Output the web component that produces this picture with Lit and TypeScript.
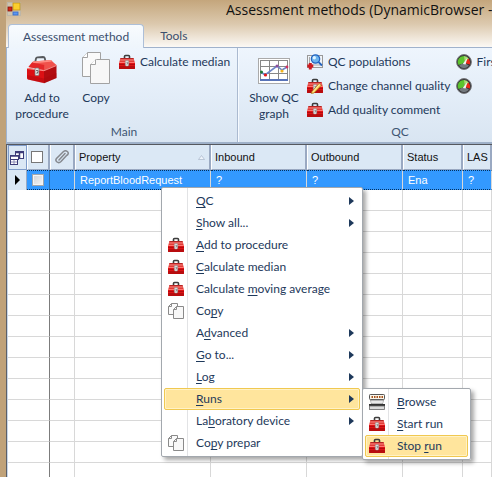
import { LitElement, html, css, svg, nothing } from "lit";
import { customElement, property } from "lit/decorators.js";
import { classMap } from "lit/directives/class-map.js";

type IconName = "box" | "bigbox" | "copy" | "bigcopy" | "graph" | "population" | "edit" | "gauge" | "analyser" | "clip" | "fields" | "app";

const toolbox = svg`
  <path d="M5.500 4.500V2.500Q5.500 1.500 6.500 1.500H9.500Q10.500 1.500 10.500 2.500V4.500" fill="none" stroke="#3c3c3c" stroke-width="1.600"/>
  <path d="M1.500 4H14.500L16 9H0Z" fill="#e23c38"/>
  <path d="M1.500 4.500H14.500" stroke="#b42422"/>
  <path d="M1.200 6H14.800" stroke="#f4817c"/>
  <rect x="0" y="8" width="16" height="7" rx=".8" fill="#e01216"/>
  <rect x="0" y="12" width="16" height="3" rx=".8" fill="#b80c0e"/>
  <path d="M0 8.500H16" stroke="#ff7771"/>
  <path d="M0 10.500H16" stroke="#a00a0c" stroke-width=".7"/>
  <rect x="6.300" y="6.500" width="3.400" height="5.500" rx="1" fill="#f2f2f2" stroke="#8a8080" stroke-width=".6"/>
  <path d="M7.200 8.200H8.800V9.400H8V10.800" fill="none" stroke="#666" stroke-width=".7"/>`;

const icons: Record<IconName, { box: string; art: unknown }> = {
  box: { box: "0 0 16 16", art: toolbox },
  edit: {
    box: "0 0 16 16",
    art: svg`${toolbox}
      <path d="M5 13.500L12 5.500L14.200 7.400L7 15L4.300 15.600Z" fill="#ffd35a" stroke="#a8741c" stroke-width=".7"/>
      <path d="M6 13.800L12.800 6.300" stroke="#fff4c0" stroke-width=".8"/>`,
  },
  bigbox: {
    box: "0 0 32 28",
    art: svg`
      <path d="M9 7L10 2.500Q10.300 1.500 11.500 1.400L17 1Q18.500 1 18.800 2.200L19.500 6" fill="none" stroke="#55585c" stroke-width="1.800"/>
      <path d="M2.500 11L7 5.500L25 4L30 9.500L18 14Z" fill="#f0524c"/>
      <path d="M7 5.500L25 4L26 5.500L7 7.500Z" fill="#ff8d84"/>
      <path d="M1 12L18 14V27L2 23.500Q1 23 1 22Z" fill="#dc1014"/>
      <path d="M2.500 11L6 6.500L18.500 9V14Z" fill="#e4282a"/>
      <path d="M18 14L30.500 9V22L18 27.300Z" fill="#b20c10"/>
      <path d="M18.500 9L26 5.500L30.500 9L18 14Z" fill="#f0524c"/>
      <path d="M1 12.500L18 14.700L30.500 9.500" fill="none" stroke="#ff9c94" stroke-width=".9"/>
      <path d="M1 19L18 22.500L30.500 17V22L18 27.300L2 23.500Z" fill="#a8080c" opacity=".4"/>
      <rect x="9" y="12" width="4" height="7.500" rx="1" fill="#e4e4e4" stroke="#777" stroke-width=".7"/>
      <path d="M10 14.500H12V16.500H11V18" fill="none" stroke="#555" stroke-width=".8"/>`,
  },
  copy: {
    box: "0 0 16 16",
    art: svg`
      <path d="M3.500 .5H9.500V11.500H.5V3.500Z" fill="#fafafa" stroke="#8a8a8a"/>
      <path d="M.5 3.500H3.500V.5" fill="none" stroke="#8a8a8a"/>
      <path d="M8.500 3.500H15.500V15.500H5.500V6.500Z" fill="#f8f8f8" stroke="#8a8a8a"/>
      <path d="M5.500 6.500H8.500V3.500" fill="none" stroke="#8a8a8a"/>`,
  },
  bigcopy: {
    box: "0 0 28 32",
    art: svg`
      <path d="M5.500 .5H18.500V24.500H.5V5.500Z" fill="#fafafa" stroke="#a2a2a2"/>
      <path d="M.5 5.500H5.500V.5" fill="#fff" stroke="#a2a2a2"/>
      <path d="M14.500 7.500H27.500V31.500H8.500V12.500Z" fill="#f7f7f7" stroke="#a2a2a2"/>
      <path d="M8.500 12.500H13.500V7.500" fill="#fff" stroke="#a2a2a2"/>`,
  },
  graph: {
    box: "0 0 32 26",
    art: svg`
      <rect x=".5" y=".5" width="31" height="25" fill="#fff" stroke="#aaa"/>
      <rect x="2.500" y="2.500" width="27" height="20" fill="#fff" stroke="#888"/>
      <path d="M11.500 3V21M20.500 3V21M3 8.500H29M3 15.500H29" stroke="#888"/>
      <rect x="2" y="21" width="28" height="2" fill="#5873b8"/>
      <path d="M3 14L7 17L19 8L24 12L29 9" fill="none" stroke="#6d86c8" stroke-width="1.600"/>
      <circle cx="3.500" cy="14" r="1.500" fill="#1d7a34"/><circle cx="7.500" cy="17" r="1.600" fill="#e81818"/>
      <circle cx="19" cy="8" r="1.500" fill="#8a4a9c"/><circle cx="24" cy="13" r="1.600" fill="#f4b41c"/>
      <circle cx="29" cy="9" r="1.400" fill="#d03060"/>`,
  },
  population: {
    box: "0 0 16 16",
    art: svg`
      <rect x=".5" y="1.500" width="15" height="12" fill="#f0f4f8" stroke="#999"/>
      <path d="M2.500 3V11H14" fill="none" stroke="#aaa"/>
      <circle cx="8.500" cy="5" r="4.200" fill="#6cb4ee" stroke="#2464c0" stroke-width="1.200"/>
      <circle cx="7.300" cy="3.800" r="1.700" fill="#e0f4ff"/>
      <path d="M11.500 8L15 11.500" stroke="#2464c0" stroke-width="1.800"/>
      <path d="M.3 10.500H6.300V13.500H.3ZM1.800 9H4.800V15.500H1.800Z" fill="#cc1a20"/>`,
  },
  gauge: {
    box: "0 0 16 16",
    art: svg`
      <circle cx="8" cy="8" r="7.400" fill="#333336" stroke="#77777a" stroke-width="1"/>
      <path d="M2.500 11A6 6 0 0 1 8 2L8.500 9Z" fill="#5cc42e"/>
      <path d="M8 2A6 6 0 0 1 13 5L8.500 9Z" fill="#a6e070"/>
      <path d="M12.200 4.500A6 6 0 0 1 13.800 10.500L8.500 9Z" fill="#ee2818"/>
      <path d="M3 11.800Q8 6.500 13 11.800Q11 14.200 8 14.200T3 11.800Z" fill="#74797e"/>
      <path d="M6.800 10L11.400 3.800L9.600 10.600Z" fill="#f4f4f4"/>`,
  },
  analyser: {
    box: "0 0 16 16",
    art: svg`
      <rect x=".5" y=".5" width="15" height="5" rx=".8" fill="#faf6ea" stroke="#555"/>
      <path d="M2.500 3H14" stroke="#a85420" stroke-width="2" stroke-dasharray="1.500 1"/>
      <path d="M1.500 6H14.500L13.500 10H2.500Z" fill="#d4d4d4" stroke="#777" stroke-width=".6"/>
      <path d="M2 8H14" stroke="#fff"/>
      <rect x="0" y="10" width="16" height="2" fill="#333"/>
      <rect x=".5" y="12" width="15" height="3.500" fill="#dcdcdc" stroke="#666" stroke-width=".8"/>`,
  },
  clip: {
    box: "0 0 16 16",
    art: svg`<path d="M13 6L7 12.500Q5 14.500 3 13T2.500 9.500L9.500 2.500Q11.500 1 13.300 2.500T13.500 6M11 4.500L5 11" fill="none" stroke="#85888e" stroke-width="1.500" stroke-linecap="round"/>`,
  },
  fields: {
    box: "0 0 16 16",
    art: svg`
      <rect x="6.500" y="1.500" width="8" height="7" fill="#fff" stroke="#3c3c78"/>
      <path d="M6 2.500H15M10.500 3V8" stroke="#3c3c78" stroke-width="1.500"/>
      <rect x="1.500" y="5.500" width="8" height="4" fill="#fff" stroke="#3c3c78"/>
      <path d="M1 6H10" stroke="#3c3c78" stroke-width="1.500"/>
      <rect x="1.500" y="9.500" width="7" height="5" fill="#fff" stroke="#3c3c78"/>
      <path d="M2 12H8M5 10V14" stroke="#8c8cb8"/>`,
  },
  app: {
    box: "0 0 14 14",
    art: svg`
      <rect x=".5" y=".5" width="13" height="13" fill="#cfc4ae" stroke="#bdb6a8"/>
      <rect x="6" y="1" width="7" height="7" fill="#fbcf2c" stroke="#c89410" stroke-width=".8"/>
      <rect x="1" y="5" width="4" height="4" fill="#d02818" stroke="#8c1408" stroke-width=".8"/>
      <rect x="6" y="10" width="5" height="3" fill="#5c96f0" stroke="#3468c8" stroke-width=".8"/>`,
  },
};

@customElement("app-icon")
export class AppIcon extends LitElement {
  @property() name: IconName = "box";
  static styles = css`
    :host { display: block; flex: none; width: 16px; height: 16px; }
    svg { display: block; width: 100%; height: 100%; }
  `;
  render() {
    const icon = icons[this.name];
    return html`<svg viewBox=${icon.box} preserveAspectRatio="xMidYMax meet" aria-hidden="true">${icon.art}</svg>`;
  }
}

interface MenuEntry {
  label: string;
  icon?: IconName;
  more?: boolean;
  active?: boolean;
}

@customElement("popup-menu")
export class PopupMenu extends LitElement {
  @property({ attribute: false }) entries: MenuEntry[] = [];
  static styles = css`
    :host { display: block; }
    .menu {
      box-sizing: border-box;
      padding: 2px;
      border: 1px solid #a3a8ae;
      border-radius: 2px;
      background: linear-gradient(90deg, #fff 26px, #e2e3e5 26px, #e2e3e5 27px, #fff 27px);
      background-origin: border-box;
      box-shadow: 3px 3px 4px rgba(0, 0, 0, 0.35);
    }
    .item {
      display: grid;
      grid-template-columns: 16px 1fr 5px;
      column-gap: 12px;
      align-items: center;
      box-sizing: border-box;
      width: 100%;
      height: 22px;
      margin: 0;
      padding: 0 5px 0 3px;
      border: 1px solid transparent;
      border-radius: 2px;
      background: none;
      color: #1e395b;
      font: inherit;
      line-height: 20px;
      text-align: left;
      white-space: nowrap;
    }
    .active {
      border-color: #f0c850;
      background: #ffe59d;
      box-shadow: inset 0 0 0 1px #fff2c6;
    }
    .label { grid-column: 2; overflow: visible; min-width: 0; }
    .key { text-decoration: underline; text-underline-offset: 2px; }
    .arrow {
      border: 4px solid transparent;
      border-left: 5px solid #1e395b;
      border-right: 0;
    }
  `;
  private label(text: string) {
    const [before, rest] = text.split("&");
    return html`${before}<span class="key">${rest[0]}</span>${rest.slice(1)}`;
  }
  render() {
    return html`<div class="menu" role="menu">
      ${this.entries.map(
        (e) => html`<button role="menuitem" class=${classMap({ item: true, active: !!e.active })}>
          ${e.icon ? html`<app-icon name=${e.icon}></app-icon>` : nothing}
          <span class="label">${this.label(e.label)}</span>
          ${e.more ? html`<span class="arrow"></span>` : nothing}
        </button>`
      )}
    </div>`;
  }
}

const mainMenu: MenuEntry[] = [
  { label: "&QC", more: true },
  { label: "&Show all...", more: true },
  { label: "&Add to procedure", icon: "box" },
  { label: "&Calculate median", icon: "box" },
  { label: "Calculate &moving average", icon: "box" },
  { label: "Co&py", icon: "copy" },
  { label: "A&dvanced", more: true },
  { label: "&Go to...", more: true },
  { label: "&Log", more: true },
  { label: "&Runs", more: true, active: true },
  { label: "La&boratory device", more: true },
  { label: "Co&py prepar", icon: "copy" },
];

const runsMenu: MenuEntry[] = [
  { label: "&Browse", icon: "analyser" },
  { label: "&Start run", icon: "box" },
  { label: "Stop &run", icon: "box", active: true },
];

@customElement("app-root")
export class AppRoot extends LitElement {
  static styles = css`
    :host {
      display: block;
      position: relative;
      box-sizing: border-box;
      height: 100vh;
      overflow: hidden;
      padding-left: 6px;
      background: #c0a279;
      color: #1e395b;
      font: 12px/16px Lato, "Open Sans", sans-serif;
    }
    button { font: inherit; color: inherit; background: none; border: 0; margin: 0; padding: 0; white-space: nowrap; }
    .window { display: flex; flex-direction: column; height: 100%; }
    .top { flex: none; background: linear-gradient(#c4a67c, #dcc9ae 50%, #fdfbf8); }
    .title { display: flex; gap: 205px; padding: 2px 0 0 1px; height: 22px; }
    .title app-icon { width: 14px; height: 14px; }
    h1 { margin: 0; color: #111; font: 400 14px/16px "Open Sans", "Noto Sans", sans-serif; white-space: nowrap; }
    .tabs { display: flex; height: 23px; padding-left: 2px; border-bottom: 1px solid #a0b2cc; }
    .tab { padding: 0 16px; height: 23px; color: #3b4f6d; }
    .current {
      height: 24px;
      padding: 0 14px;
      border: 1px solid #adbfd8;
      border-bottom: 0;
      border-radius: 4px 4px 0 0;
      background: linear-gradient(#f8fbfe, #eef5fc);
    }
    .ribbon {
      flex: none;
      display: flex;
      height: 94px;
      border-left: 1px solid #9fb3cf;
      border-bottom: 2px solid #9fb1c9;
      background: linear-gradient(#eef5fd, #e3edf8 50%, #d9e5f2);
      overflow: hidden;
    }
    .group {
      flex: none;
      display: flex;
      flex-direction: column;
      justify-content: space-between;
      box-sizing: border-box;
      padding: 4px 0 2px;
      border-right: 1px solid #abbad0;
    }
    .main { width: 231px; padding-left: 4px; }
    .qc { width: 320px; padding-left: 4px; border-left: 1px solid #f6faff; }
    .tools { display: flex; align-items: flex-start; }
    .caption { text-align: center; color: #3e5673; }
    .big { flex: none; display: flex; flex-direction: column; align-items: center; width: 62px; }
    .big app-icon { height: 32px; width: 28px; margin-bottom: 6px; }
    .big .wide { width: 32px; }
    .narrow { width: 46px; }
    .list { flex: none; display: grid; row-gap: 8px; padding-top: 2px; }
    .qc .list { margin-left: 2px; }
    .qc .gauges { margin-left: 5px; }
    .small { display: flex; align-items: center; gap: 5px; height: 16px; }
    .grid { flex: 1; overflow: hidden; border-top: 1px solid #55585e; border-left: 1px solid #5c6068; background: #fff; }
    table {
      width: 100%;
      table-layout: fixed;
      border-collapse: separate;
      border-spacing: 0;
      border-left: 1px solid #c8d6e8;
      font: 11px/16px "Liberation Sans", Arial, sans-serif;
    }
    th, td { box-sizing: border-box; padding: 0 0 0 5px; text-align: left; font-weight: 400; white-space: nowrap; overflow: hidden; }
    th {
      height: 25px;
      background: #dbe8f5;
      color: #111;
      border-right: 2px solid #9aa9c2;
      border-left: 1px solid #fff;
      border-bottom: 1px solid #9aa9c2;
      padding-left: 3px;
    }
    th.chooser { border: 1px solid #7f9cca; padding: 0; }
    .property { display: flex; justify-content: space-between; align-items: center; padding-right: 4px; }
    .sort { width: 7px; height: 5px; display: block; }
    td { height: 21px; border-right: 1px solid #d8d8d8; border-bottom: 1px solid #d8d8d8; }
    .dark { border-right-color: #7c7c7c; }
    .selected td { height: 20px; background: #3399ff; color: #fff; border-top: 1px dotted #03305e; border-bottom: 1px dotted #03305e; }
    .selected .dark { border-right-color: #2f6ea8; }
    .selected td.marker { background: #dbe8f5; border: 0; border-right: 1px solid #9aa9c2; padding: 0 0 0 7px; }
    .marker span { display: block; width: 0; border: 5px solid transparent; border-left-color: #000; border-right: 0; }
    input { appearance: none; display: block; box-sizing: border-box; width: 12px; height: 12px; margin: 0; border: 1px solid #777; background: #fff; }
    .selected input { border-color: #a0a6ac; background: linear-gradient(135deg, #cfd3d8, #f6f6f6); box-shadow: inset 0 0 0 1px #f4f4f4; }
    .context { position: absolute; left: 161px; top: 187px; width: 202px; }
    .runs { position: absolute; left: 362px; top: 388px; width: 109px; }
  `;

  private small(icon: IconName, label: string) {
    return html`<button class="small"><app-icon name=${icon}></app-icon>${label}</button>`;
  }

  render() {
    return html`
      <div class="window">
        <header class="top">
          <div class="title"><app-icon name="app"></app-icon><h1>Assessment methods (DynamicBrowser -</h1></div>
          <nav class="tabs" role="tablist">
            <button class="tab current" role="tab" aria-selected="true">Assessment method</button>
            <button class="tab" role="tab">Tools</button>
          </nav>
        </header>
        <section class="ribbon">
          <div class="group main">
            <div class="tools">
              <button class="big"><app-icon class="wide" name="bigbox"></app-icon>Add to<br />procedure</button>
              <button class="big narrow"><app-icon name="bigcopy"></app-icon>Copy</button>
              <div class="list">${this.small("box", "Calculate median")}</div>
            </div>
            <div class="caption">Main</div>
          </div>
          <div class="group qc">
            <div class="tools">
              <button class="big"><app-icon class="wide" name="graph"></app-icon>Show QC<br />graph</button>
              <div class="list">
                ${this.small("population", "QC populations")} ${this.small("edit", "Change channel quality")}
                ${this.small("box", "Add quality comment")}
              </div>
              <div class="list gauges">
                ${this.small("gauge", "Firs")}
                <button class="small" aria-label="Gauge"><app-icon name="gauge"></app-icon></button>
              </div>
            </div>
            <div class="caption">QC</div>
          </div>
        </section>
        <main class="grid">
          <table>
            <colgroup>
              ${[19, 23, 25, 136, 96, 96, 60].map((w) => html`<col width=${w} />`)}
              <col />
            </colgroup>
            <thead>
              <tr>
                <th class="chooser"><app-icon name="fields"></app-icon></th>
                <th><input type="checkbox" aria-label="Select all" /></th>
                <th><app-icon name="clip"></app-icon></th>
                <th>
                  <div class="property">
                    Property
                    <svg class="sort" viewBox="0 0 7 5"><path d="M.5 4.500L3.500 .5L6.500 4.500Z" fill="#eef4fb" stroke="#a9b6c8" stroke-width=".7" /></svg>
                  </div>
                </th>
                <th>Inbound</th>
                <th>Outbound</th>
                <th>Status</th>
                <th>LAS</th>
              </tr>
            </thead>
            <tbody>
              <tr class="selected">
                <td class="marker"><span></span></td>
                <td class="dark"><input type="checkbox" aria-label="Select ReportBloodRequest" /></td>
                <td></td>
                <td>ReportBloodRequest</td>
                <td>?</td>
                <td>?</td>
                <td>Ena</td>
                <td>?</td>
              </tr>
              ${Array.from(
                { length: 40 },
                () => html`<tr><td class="dark" colspan="2"></td><td></td><td></td><td></td><td></td><td></td><td></td></tr>`
              )}
            </tbody>
          </table>
        </main>
      </div>
      <popup-menu class="context" .entries=${mainMenu}></popup-menu>
      <popup-menu class="runs" .entries=${runsMenu}></popup-menu>
    `;
  }
}
